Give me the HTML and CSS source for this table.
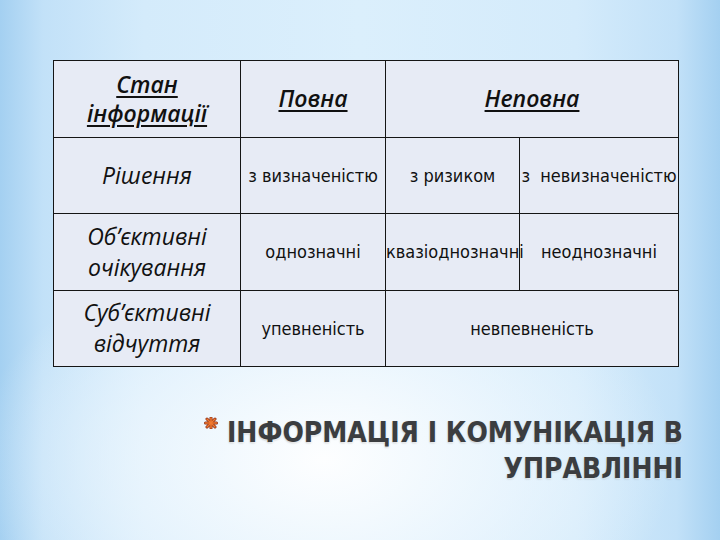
FILE: index.html
```html
<!DOCTYPE html>
<html lang="uk">
<head>
<meta charset="utf-8">
<link rel="stylesheet" href="styles.css">
</head>
<body>
<div class="slide">
  <table class="grid">
    <colgroup>
      <col class="c1"><col class="c2"><col class="c3"><col class="c4">
    </colgroup>
    <tr>
      <td class="head">Стан <br>інформації</td>
      <td class="head">Повна</td>
      <td class="head" colspan="2">Неповна</td>
    </tr>
    <tr>
      <td class="row">Рішення</td>
      <td class="val">з визначеністю</td>
      <td class="val">з ризиком</td>
      <td class="val">з&nbsp; невизначеністю</td>
    </tr>
    <tr>
      <td class="row">Об’єктивні очікування</td>
      <td class="val">однозначні</td>
      <td class="val">квазіоднозначні</td>
      <td class="val">неоднозначні</td>
    </tr>
    <tr>
      <td class="row">Суб’єктивні відчуття</td>
      <td class="val">упевненість</td>
      <td class="val" colspan="2">невпевненість</td>
    </tr>
  </table>
  <h1 class="title"><svg class="bullet" viewBox="0 0 14 12" width="14" height="12"><g stroke="#8a2a10" stroke-width="3" stroke-linecap="round"><line x1="7" y1="1" x2="7" y2="11"/><line x1="1.5" y1="6" x2="12.5" y2="6"/><line x1="3" y1="2" x2="11" y2="10"/><line x1="11" y1="2" x2="3" y2="10"/></g><g stroke="#f07a30" stroke-width="1.6" stroke-linecap="round"><line x1="7" y1="1" x2="7" y2="11"/><line x1="1.5" y1="6" x2="12.5" y2="6"/><line x1="3" y1="2" x2="11" y2="10"/><line x1="11" y1="2" x2="3" y2="10"/></g></svg>ІНФОРМАЦІЯ І КОМУНІКАЦІЯ В<br>УПРАВЛІННІ</h1>
</div>
</body>
</html>
```

FILE: styles.css
```css
html, body {
  margin: 0;
  padding: 0;
}
body {
  width: 720px;
  height: 540px;
  overflow: hidden;
}
.slide {
  width: 720px;
  height: 540px;
  box-sizing: border-box;
  padding: 60px 0 0 53px;
  background:
    radial-gradient(ellipse 65% 55% at 45% 85%, rgba(255,255,255,0.95) 0%, rgba(240,248,254,0.7) 40%, rgba(220,238,251,0) 75%),
    linear-gradient(90deg, #a4d0f1 0%, #c2e1f8 6%, #d4ebfb 20%, #dbeffc 50%, #d4ebfb 80%, #c2e1f8 94%, #a4d0f1 100%);
}
.grid {
  border-collapse: collapse;
  table-layout: fixed;
  width: 625px;
}
.c1 { width: 187px; }
.c2 { width: 145px; }
.c3 { width: 134px; }
.c4 { width: 159px; }
.grid td {
  border: 1.5px solid #151515;
  background: #e7ebf5;
  height: 75.5px;
  padding: 0;
  text-align: center;
  vertical-align: middle;
  color: #111;
}
.head {
  font-family: "Open Sans", "DejaVu Sans", sans-serif;
  font-style: italic;
  font-weight: 600;
  font-size: 23px;
  line-height: 29px;
  text-decoration: underline;
  text-decoration-thickness: 1.5px;
  text-underline-offset: 3px;
}
.row {
  font-family: "Open Sans", "DejaVu Sans", sans-serif;
  font-style: italic;
  font-size: 23px;
  line-height: 31px;
}
.val {
  font-family: "Liberation Sans Narrow", "DejaVu Sans Condensed", sans-serif;
  font-size: 18px;
  white-space: nowrap;
}
.title {
  margin: 48px 37px 0 0;
  text-align: right;
  font-family: "DejaVu Sans Condensed", "DejaVu Sans", sans-serif;
  font-weight: bold;
  font-size: 28px;
  line-height: 36px;
  color: #3b3d40;
  text-shadow: 1px 1px 1px rgba(255,255,255,0.6), 0 1px 2px rgba(0,0,0,0.25);
}
.bullet {
  vertical-align: top;
  margin: 2px 9px 0 0;
}
```
